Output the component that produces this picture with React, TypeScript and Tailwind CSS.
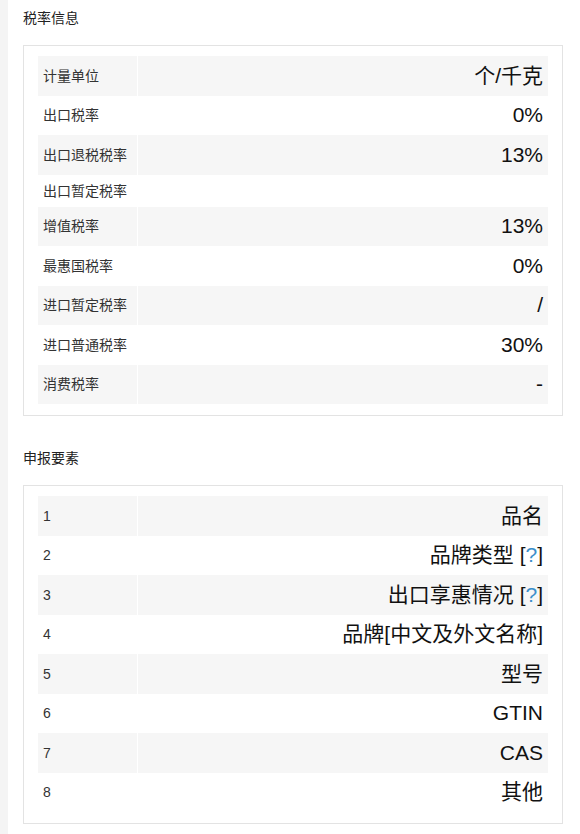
const font = { fontFamily: '"Liberation Sans", Arial, "Noto Sans CJK SC", sans-serif' };

type Row = { label: string; value?: React.ReactNode };

const taxRows: Row[] = [
  { label: "计量单位", value: "个/千克" },
  { label: "出口税率", value: "0%" },
  { label: "出口退税税率", value: "13%" },
  { label: "出口暂定税率" },
  { label: "增值税率", value: "13%" },
  { label: "最惠国税率", value: "0%" },
  { label: "进口暂定税率", value: "/" },
  { label: "进口普通税率", value: "30%" },
  { label: "消费税率", value: "-" },
];

function Help() {
  return (
    <>
      {" "}[<span className="text-[#3b8fcb]">?</span>]
    </>
  );
}

const declareRows: Row[] = [
  { label: "1", value: "品名" },
  { label: "2", value: <>品牌类型<Help /></> },
  { label: "3", value: <>出口享惠情况<Help /></> },
  { label: "4", value: "品牌[中文及外文名称]" },
  { label: "5", value: "型号" },
  { label: "6", value: "GTIN" },
  { label: "7", value: "CAS" },
  { label: "8", value: "其他" },
];

function InfoTable({ rows }: { rows: Row[] }) {
  return (
    <div className="border border-[#e3e3e3] px-[14px] pt-[10px] pb-[11px]">
      {rows.map((r, i) => {
        const bg = i % 2 === 0 ? "bg-[#f6f6f6]" : "bg-white";
        return (
          <div key={i} className={`flex gap-[1px] ${r.value ? "h-[39.5px]" : "h-[32px]"}`}>
            <div className={`w-[99px] shrink-0 flex items-center pl-[5px] text-[14px] leading-[16px] text-[#333] ${bg}`}>
              {r.label}
            </div>
            <div className={`flex-1 flex items-center justify-end pr-[5px] text-[21px] leading-[24px] text-[#111] ${bg}`}>
              {r.value}
            </div>
          </div>
        );
      })}
    </div>
  );
}

export default function App() {
  return (
    <div className="flex min-h-[834px] bg-white" style={font}>
      <div className="w-[8px] shrink-0 bg-[#f4f4f4]" />
      <div className="flex-1 pl-[15px] pr-[17px]">
        <h3 className="pt-[10px] text-[14px] leading-[16px] text-[#222]">税率信息</h3>
        <div className="mt-[19px]">
          <InfoTable rows={taxRows} />
        </div>
        <h3 className="mt-[34px] text-[14px] leading-[16px] text-[#222]">申报要素</h3>
        <div className="mt-[19px]">
          <InfoTable rows={declareRows} />
        </div>
      </div>
    </div>
  );
}
